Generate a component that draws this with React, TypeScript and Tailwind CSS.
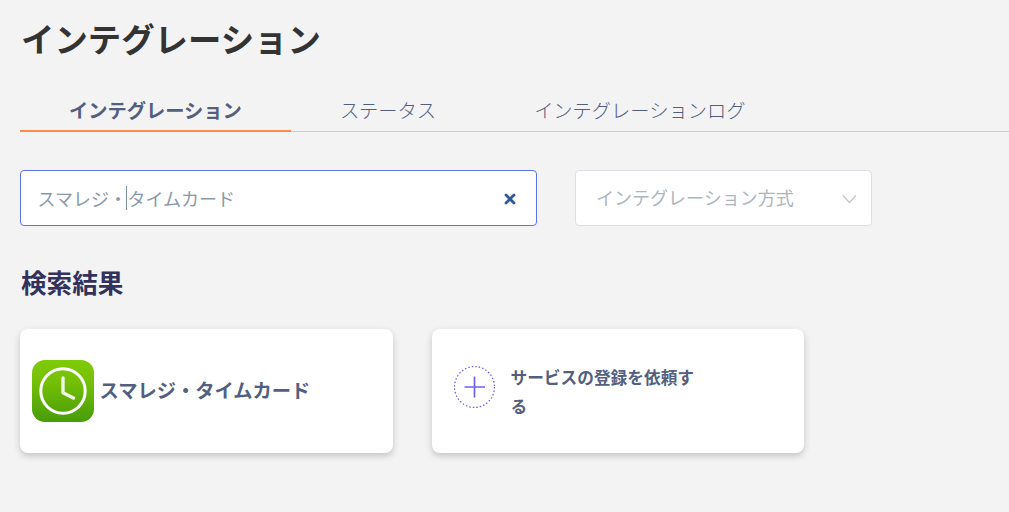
import React, { useState } from "react";

const tabs = ["インテグレーション", "ステータス", "インテグレーションログ"];

function ClockLogo() {
  return (
    <svg width="62" height="62" viewBox="0 0 62 62" fill="none">
      <defs>
        <linearGradient id="clock-bg" x1="0" y1="0" x2="0" y2="1">
          <stop offset="0" stopColor="#7fca08" />
          <stop offset="0.35" stopColor="#75c006" />
          <stop offset="1" stopColor="#479c08" />
        </linearGradient>
      </defs>
      <rect width="62" height="62" rx="13" fill="url(#clock-bg)" />
      <circle cx="31" cy="31" r="22.2" stroke="#fff" strokeWidth="3" />
      <path
        d="M31 18V32.8L41.5 38"
        stroke="#f1f8e4"
        strokeWidth="3.4"
        strokeLinecap="round"
        strokeLinejoin="round"
      />
    </svg>
  );
}

function PlusIcon() {
  return (
    <svg width="41" height="42" viewBox="0 0 41 42" fill="none">
      <ellipse
        cx="20.5"
        cy="21"
        rx="20"
        ry="20.5"
        stroke="#6d63e6"
        strokeWidth="1.3"
        strokeDasharray="1.5 2.04"
      />
      <path d="M10.5 21H31M20.5 10.5V31.5" stroke="#6d63e6" strokeWidth="1.7" />
    </svg>
  );
}

function App() {
  const [active, setActive] = useState(0);

  return (
    <main className="h-screen overflow-hidden bg-[#f3f3f3] pl-5 pt-[13px] font-['Noto_Sans_CJK_JP',sans-serif] text-[#525f7f]">
      <h1 className="h-[50px] pl-px text-[33.4px] leading-[50px] font-bold text-[#333]">
        インテグレーション
      </h1>

      <nav className="mt-[29px] flex h-10 border-b border-[#ccc]">
        {tabs.map((tab, i) => (
          <button
            key={tab}
            onClick={() => setActive(i)}
            className={`h-10 px-[49px] text-[19.25px] leading-[34px] pb-0.5 whitespace-nowrap border-b-2 ${
              active === i
                ? "font-bold border-[#ff8a4c]"
                : "font-light border-transparent"
            }`}
          >
            {tab}
          </button>
        ))}
      </nav>

      <div className="mt-[38px] flex gap-[38px]">
        <div className="flex h-14 w-[517px] items-center rounded border border-[#5e72e4] bg-white pl-[16.5px] pr-[20px] text-lg text-[#8898aa]">
          <span>スマレジ・</span>
          <span className="-ml-px h-6 w-px bg-[#7b8ba0]"></span>
          <span className="ml-[0.5px]">タイムカード</span>
          <button className="mt-0.5 ml-auto">
            <svg width="12" height="12" viewBox="0 0 12 12" fill="none">
              <path
                d="M2 2L10 10M10 2L2 10"
                stroke="#3058a0"
                strokeWidth="2.8"
                strokeLinecap="round"
              />
            </svg>
          </button>
        </div>
        <button className="flex h-14 w-[297px] items-center justify-between rounded border border-[#dcdfe6] bg-white pl-5 pr-[14px] text-lg text-[#adb5bd]">
          <span className="-mt-0.5">インテグレーション方式</span>
          <svg className="mt-px" width="15" height="10" viewBox="0 0 15 10" fill="none">
            <path d="M1 1.5L7.5 8.5L14 1.5" stroke="#c0c4cc" strokeWidth="1.2" />
          </svg>
        </button>
      </div>

      <h2 className="mt-[37px] h-[38px] pl-px text-[25.6px] leading-[38px] font-bold text-[#32325d]">
        検索結果
      </h2>

      <div className="mt-7 flex gap-[39px]">
        <div className="flex h-[124px] w-[373px] items-center rounded-lg bg-white pl-3 shadow-[0_3px_6px_rgba(50,50,70,0.24)]">
          <ClockLogo />
          <p className="-mt-0.5 ml-[5.5px] text-[19.25px] leading-7 font-bold">
            スマレジ・タイムカード
          </p>
        </div>
        <div className="flex h-[124px] w-[372px] items-start rounded-lg bg-white pl-[22px] pt-[34px] shadow-[0_3px_6px_rgba(50,50,70,0.24)]">
          <div className="mt-[3px]">
            <PlusIcon />
          </div>
          <p className="ml-[15.5px] w-[190px] text-[16.7px] leading-[29px] font-bold">
            サービスの登録を依頼する
          </p>
        </div>
      </div>
    </main>
  );
}

export default App;
